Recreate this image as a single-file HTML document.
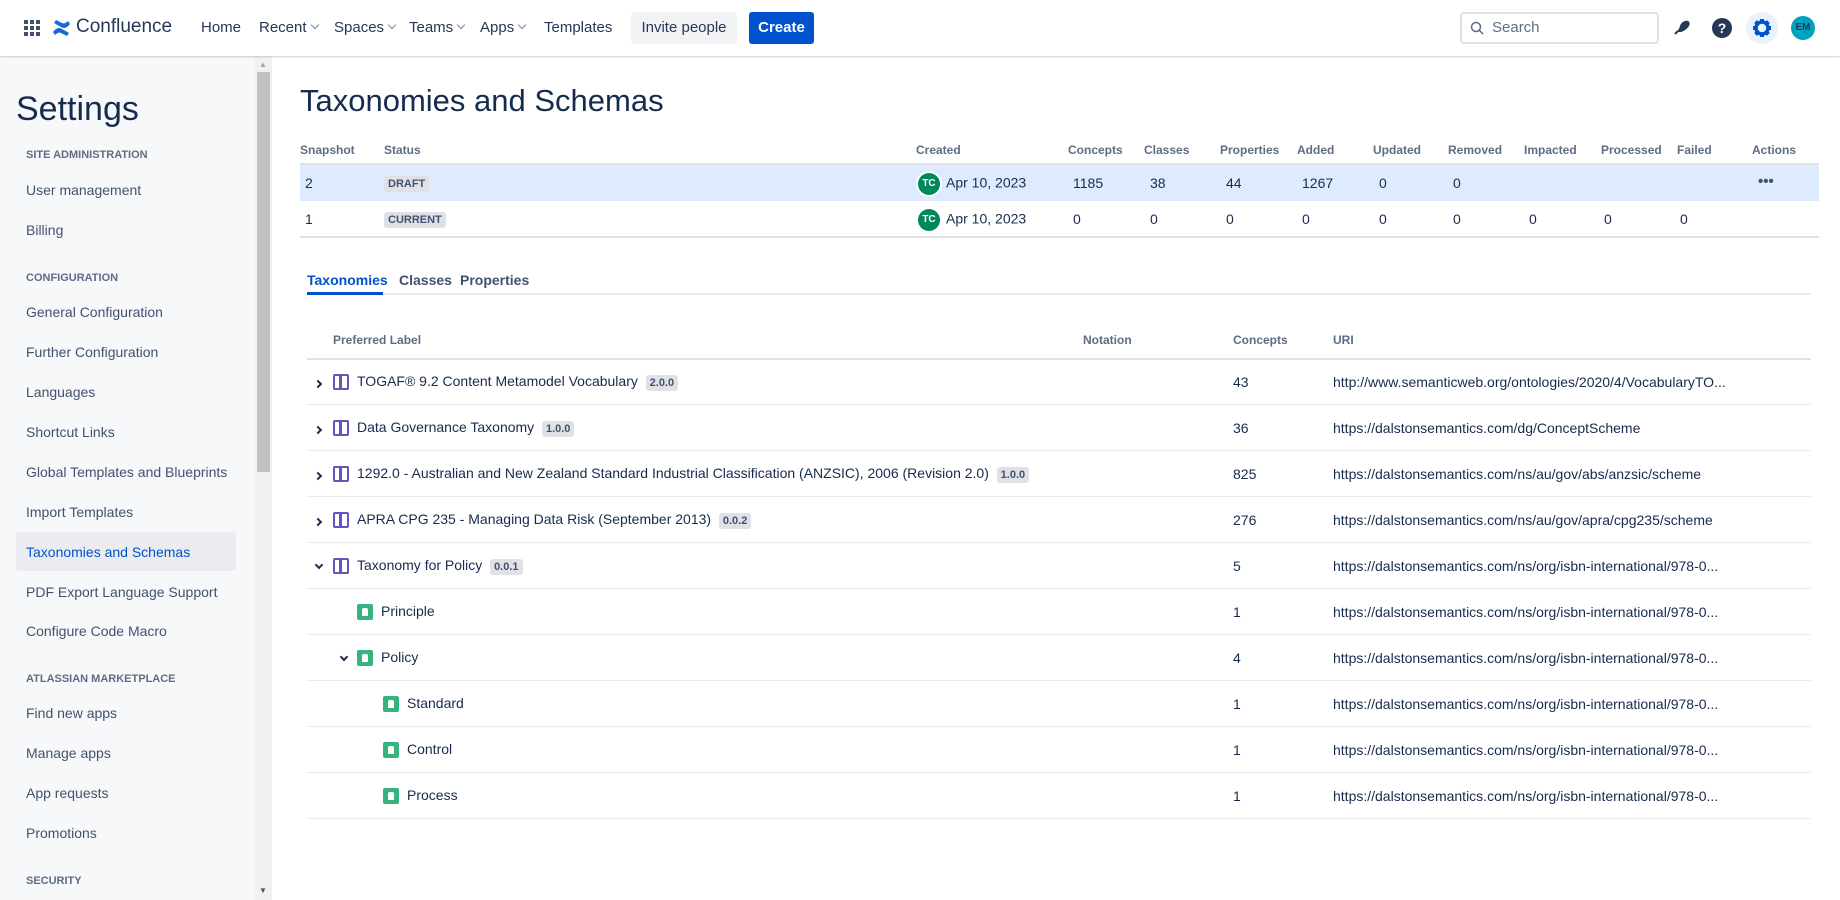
<!DOCTYPE html>
<html><head><meta charset="utf-8"><style>
*{box-sizing:border-box;margin:0;padding:0}
body{width:1840px;height:900px;overflow:hidden;font-family:"Liberation Sans",sans-serif;color:#172b4d;background:#fff;position:relative;font-size:14px}
.a{position:absolute;white-space:nowrap}
.hdr{position:absolute;left:0;top:0;width:1840px;height:56px;background:#fff;box-shadow:0 1px 2px rgba(9,30,66,.2);z-index:5}
.nav{font-size:15px;color:#253858;top:19px}
.chev{display:inline-block;width:6px;height:6px;border-right:1.3px solid #7a869a;border-bottom:1.3px solid #7a869a;transform:rotate(45deg);margin-left:5px;position:relative;top:-4px}
.side{position:absolute;left:0;top:56px;width:255px;height:844px;background:#f7f8f9}
.sb{position:absolute;left:255px;top:56px;width:17px;height:844px;background:#f1f1f1}
.si{left:26px;font-size:14px;color:#42526e}
.sh{left:26px;font-size:11px;font-weight:bold;color:#5e6c84}
.th{font-size:12px;font-weight:bold;color:#5e6c84}
.lz{display:inline-block;background:#dfe1e6;color:#42526e;font-size:11px;font-weight:bold;padding:2px 4px;border-radius:3px}
.av{display:inline-block;width:22px;height:22px;border-radius:50%;background:#00875a;color:#fff;font-size:10px;font-weight:bold;text-align:center;line-height:22px;vertical-align:middle;margin-right:6px;box-shadow:0 0 0 2px #fff}
.line{position:absolute;left:307px;width:1504px;height:1px;background:#ebecf0}
.ic{display:inline-block;width:16px;height:16px;border:2.5px solid #6554c0;border-radius:2px;position:relative;vertical-align:middle;margin-right:8px}
.ic:after{content:"";position:absolute;left:4px;top:0;width:2.5px;height:100%;background:#6554c0}
.gi{display:inline-block;width:16px;height:16px;background:#36b37e;border-radius:2px;position:relative;vertical-align:middle;margin-right:8px}
.gi:after{content:"";position:absolute;left:5px;top:4px;width:6px;height:8px;background:#fff;border-radius:2px 2px 0 0}
.tc{font-size:14px;color:#172b4d}
.ar{display:inline-block;width:6px;height:6px;border-right:2px solid #172b4d;border-bottom:2px solid #172b4d;transform:rotate(-45deg)}
.ad{transform:rotate(45deg)}
</style></head><body>
<div class="hdr">
<svg class="a" style="left:24px;top:20px" width="16" height="16"><g fill="#42526e"><rect x="0" y="0" width="4" height="4"/><rect x="6" y="0" width="4" height="4"/><rect x="12" y="0" width="4" height="4"/><rect x="0" y="6" width="4" height="4"/><rect x="6" y="6" width="4" height="4"/><rect x="12" y="6" width="4" height="4"/><rect x="0" y="12" width="4" height="4"/><rect x="6" y="12" width="4" height="4"/><rect x="0" y="12" width="4" height="4"/><rect x="12" y="12" width="4" height="4"/></g></svg>
<svg class="a" style="left:52px;top:19px" width="19" height="18" viewBox="0 0 19 18"><path d="M1 13c3-4 6-5 9-3l7 4-2 3-6-3c-2-1-4 0-6 2z M18 5c-3 4-6 5-9 3L2 4l2-3 6 3c2 1 4 0 6-2z" fill="#1868db"/></svg>
<div class="a" style="left:76px;top:16px;font-size:19px;color:#253858">Confluence</div>
<div class="a nav" style="left:201px">Home</div>
<div class="a nav" style="left:259px">Recent<span class="chev"></span></div>
<div class="a nav" style="left:334px">Spaces<span class="chev"></span></div>
<div class="a nav" style="left:409px">Teams<span class="chev"></span></div>
<div class="a nav" style="left:480px">Apps<span class="chev"></span></div>
<div class="a nav" style="left:544px">Templates</div>
<div class="a" style="left:631px;top:12px;width:106px;height:32px;background:#f1f2f4;border-radius:3px;font-size:15px;color:#253858;text-align:center;line-height:32px">Invite people</div>
<div class="a" style="left:749px;top:12px;width:65px;height:32px;background:#0052cc;border-radius:3px;font-size:15px;color:#fff;font-weight:bold;text-align:center;line-height:32px">Create</div>
<div class="a" style="left:1460px;top:12px;width:199px;height:32px;border:2px solid #dfe1e6;border-radius:4px"></div>
<svg class="a" style="left:1470px;top:21px" width="14" height="14"><circle cx="6" cy="6" r="4.5" fill="none" stroke="#5e6c84" stroke-width="1.5"/><path d="M9 9l4 4" stroke="#5e6c84" stroke-width="1.5"/></svg>
<div class="a" style="left:1492px;top:19px;font-size:15px;color:#5e6c84">Search</div>
<svg class="a" style="left:1673px;top:17px" width="20" height="20" viewBox="0 0 20 20"><path d="M3 15c2-1 3-3 4-6s4-6 8-5c2 1 2 3 1 5-2 3-5 5-8 6z" fill="#253858"/><path d="M2 17l3-3" stroke="#253858" stroke-width="2"/></svg>
<svg class="a" style="left:1711px;top:17px" width="22" height="22"><circle cx="11" cy="11" r="10" fill="#253858"/><text x="11" y="16" font-size="14" font-weight="bold" fill="#fff" text-anchor="middle" font-family="Liberation Sans">?</text></svg>
<div class="a" style="left:1746px;top:12px;width:32px;height:32px;border-radius:50%;background:#e9f2ff"></div>
<svg class="a" style="left:1751px;top:17px" width="22" height="22" viewBox="0 0 22 22"><circle cx="11" cy="11" r="6" fill="none" stroke="#0052cc" stroke-width="3.5"/><g stroke="#0052cc" stroke-width="4"><path d="M11 2v4M11 16v4M2 11h4M16 11h4M4.6 4.6l2.8 2.8M14.6 14.6l2.8 2.8M4.6 17.4l2.8-2.8M14.6 7.4l2.8-2.8"/></g><circle cx="11" cy="11" r="3" fill="#e9f2ff"/></svg>
<div class="a" style="left:1791px;top:16px;width:24px;height:24px;border-radius:50%;background:#00a3bf;color:#253858;font-size:10px;font-weight:bold;text-align:center;line-height:24px">EM</div>
</div>

<div class="side"></div>
<div class="sb"><div style="position:absolute;left:2px;top:16px;width:13px;height:400px;background:#c1c1c1"></div><div style="position:absolute;left:4px;top:4px;font-size:8px;color:#a3a3a3">▲</div><div style="position:absolute;left:4px;top:830px;font-size:8px;color:#505050">▼</div></div>
<div class="a" style="left:16px;top:90px;font-size:34px;color:#172b4d">Settings</div>
<div class="a sh" style="top:149px">SITE ADMINISTRATION</div>
<div class="a si" style="top:182px">User management</div>
<div class="a si" style="top:222px">Billing</div>
<div class="a sh" style="top:272px">CONFIGURATION</div>
<div class="a si" style="top:304px">General Configuration</div>
<div class="a si" style="top:344px">Further Configuration</div>
<div class="a si" style="top:384px">Languages</div>
<div class="a si" style="top:424px">Shortcut Links</div>
<div class="a si" style="top:464px">Global Templates and Blueprints</div>
<div class="a si" style="top:504px">Import Templates</div>
<div class="a" style="left:16px;top:532px;width:220px;height:39px;background:#ebecf0;border-radius:3px"></div>
<div class="a si" style="top:544px;color:#0052cc">Taxonomies and Schemas</div>
<div class="a si" style="top:584px">PDF Export Language Support</div>
<div class="a si" style="top:623px">Configure Code Macro</div>
<div class="a sh" style="top:673px">ATLASSIAN MARKETPLACE</div>
<div class="a si" style="top:705px">Find new apps</div>
<div class="a si" style="top:745px">Manage apps</div>
<div class="a si" style="top:785px">App requests</div>
<div class="a si" style="top:825px">Promotions</div>
<div class="a sh" style="top:875px">SECURITY</div>

<div class="a" style="left:300px;top:83px;font-size:31px;color:#172b4d">Taxonomies and Schemas</div>
<div class="a th" style="left:300px;top:143px">Snapshot</div>
<div class="a th" style="left:384px;top:143px">Status</div>
<div class="a th" style="left:916px;top:143px">Created</div>
<div class="a th" style="left:1068px;top:143px">Concepts</div>
<div class="a th" style="left:1144px;top:143px">Classes</div>
<div class="a th" style="left:1220px;top:143px">Properties</div>
<div class="a th" style="left:1297px;top:143px">Added</div>
<div class="a th" style="left:1373px;top:143px">Updated</div>
<div class="a th" style="left:1448px;top:143px">Removed</div>
<div class="a th" style="left:1524px;top:143px">Impacted</div>
<div class="a th" style="left:1601px;top:143px">Processed</div>
<div class="a th" style="left:1677px;top:143px">Failed</div>
<div class="a th" style="left:1752px;top:143px">Actions</div>
<div class="a" style="left:300px;top:163px;width:1519px;height:2px;background:#dfe1e6"></div>
<div class="a" style="left:300px;top:165px;width:1519px;height:36px;background:#deebff"></div>
<div class="a" style="left:300px;top:236px;width:1519px;height:2px;background:#dfe1e6"></div>
<div class="a tc" style="left:305px;top:175px">2</div>
<div class="a" style="left:384px;top:174px"><span class="lz">DRAFT</span></div>
<div class="a tc" style="left:918px;top:173px"><span class="av">TC</span>Apr 10, 2023</div>
<div class="a tc" style="left:1073px;top:175px">1185</div>
<div class="a tc" style="left:1150px;top:175px">38</div>
<div class="a tc" style="left:1226px;top:175px">44</div>
<div class="a tc" style="left:1302px;top:175px">1267</div>
<div class="a tc" style="left:1379px;top:175px">0</div>
<div class="a tc" style="left:1453px;top:175px">0</div>
<div class="a" style="left:1758px;top:173px;font-size:15px;font-weight:bold;letter-spacing:0px;color:#42526e">•••</div>
<div class="a tc" style="left:305px;top:211px">1</div>
<div class="a" style="left:384px;top:210px"><span class="lz">CURRENT</span></div>
<div class="a tc" style="left:918px;top:209px"><span class="av">TC</span>Apr 10, 2023</div>
<div class="a tc" style="left:1073px;top:211px">0</div><div class="a tc" style="left:1150px;top:211px">0</div><div class="a tc" style="left:1226px;top:211px">0</div><div class="a tc" style="left:1302px;top:211px">0</div><div class="a tc" style="left:1379px;top:211px">0</div><div class="a tc" style="left:1453px;top:211px">0</div><div class="a tc" style="left:1529px;top:211px">0</div><div class="a tc" style="left:1604px;top:211px">0</div><div class="a tc" style="left:1680px;top:211px">0</div>

<div class="a" style="left:307px;top:272px;font-size:14px;color:#0052cc;font-weight:bold">Taxonomies</div>
<div class="a" style="left:399px;top:272px;font-size:14px;color:#42526e;font-weight:bold">Classes</div>
<div class="a" style="left:460px;top:272px;font-size:14px;color:#42526e;font-weight:bold">Properties</div>
<div class="a" style="left:307px;top:293px;width:1504px;height:2px;background:#ebecf0"></div>
<div class="a" style="left:307px;top:292px;width:76px;height:3px;background:#0052cc"></div>

<div class="a th" style="left:333px;top:333px">Preferred Label</div>
<div class="a th" style="left:1083px;top:333px">Notation</div>
<div class="a th" style="left:1233px;top:333px">Concepts</div>
<div class="a th" style="left:1333px;top:333px">URI</div>
<div class="a" style="left:307px;top:358px;width:1504px;height:2px;background:#dfe1e6"></div>

<div class="line" style="top:404px"></div><div class="line" style="top:450px"></div><div class="line" style="top:496px"></div><div class="line" style="top:542px"></div><div class="line" style="top:588px"></div><div class="line" style="top:634px"></div><div class="line" style="top:680px"></div><div class="line" style="top:726px"></div><div class="line" style="top:772px"></div><div class="line" style="top:818px"></div>

<div class="a" style="left:315px;top:374px"><span class="ar"></span></div>
<div class="a tc" style="left:333px;top:373px"><span class="ic"></span>TOGAF® 9.2 Content Metamodel Vocabulary &nbsp;<span class="lz">2.0.0</span></div>
<div class="a tc" style="left:1233px;top:374px">43</div>
<div class="a tc" style="left:1333px;top:374px">http://www.semanticweb.org/ontologies/2020/4/VocabularyTO...</div>

<div class="a" style="left:315px;top:420px"><span class="ar"></span></div>
<div class="a tc" style="left:333px;top:419px"><span class="ic"></span>Data Governance Taxonomy &nbsp;<span class="lz">1.0.0</span></div>
<div class="a tc" style="left:1233px;top:420px">36</div>
<div class="a tc" style="left:1333px;top:420px">https://dalstonsemantics.com/dg/ConceptScheme</div>

<div class="a" style="left:315px;top:466px"><span class="ar"></span></div>
<div class="a tc" style="left:333px;top:465px"><span class="ic"></span>1292.0 - Australian and New Zealand Standard Industrial Classification (ANZSIC), 2006 (Revision 2.0) &nbsp;<span class="lz">1.0.0</span></div>
<div class="a tc" style="left:1233px;top:466px">825</div>
<div class="a tc" style="left:1333px;top:466px">https://dalstonsemantics.com/ns/au/gov/abs/anzsic/scheme</div>

<div class="a" style="left:315px;top:512px"><span class="ar"></span></div>
<div class="a tc" style="left:333px;top:511px"><span class="ic"></span>APRA CPG 235 - Managing Data Risk (September 2013) &nbsp;<span class="lz">0.0.2</span></div>
<div class="a tc" style="left:1233px;top:512px">276</div>
<div class="a tc" style="left:1333px;top:512px">https://dalstonsemantics.com/ns/au/gov/apra/cpg235/scheme</div>

<div class="a" style="left:316px;top:555px"><span class="ar ad"></span></div>
<div class="a tc" style="left:333px;top:557px"><span class="ic"></span>Taxonomy for Policy &nbsp;<span class="lz">0.0.1</span></div>
<div class="a tc" style="left:1233px;top:558px">5</div>
<div class="a tc" style="left:1333px;top:558px">https://dalstonsemantics.com/ns/org/isbn-international/978-0...</div>

<div class="a tc" style="left:357px;top:603px"><span class="gi"></span>Principle</div>
<div class="a tc" style="left:1233px;top:604px">1</div>
<div class="a tc" style="left:1333px;top:604px">https://dalstonsemantics.com/ns/org/isbn-international/978-0...</div>

<div class="a" style="left:341px;top:647px"><span class="ar ad"></span></div>
<div class="a tc" style="left:357px;top:649px"><span class="gi"></span>Policy</div>
<div class="a tc" style="left:1233px;top:650px">4</div>
<div class="a tc" style="left:1333px;top:650px">https://dalstonsemantics.com/ns/org/isbn-international/978-0...</div>

<div class="a tc" style="left:383px;top:695px"><span class="gi"></span>Standard</div>
<div class="a tc" style="left:1233px;top:696px">1</div>
<div class="a tc" style="left:1333px;top:696px">https://dalstonsemantics.com/ns/org/isbn-international/978-0...</div>

<div class="a tc" style="left:383px;top:741px"><span class="gi"></span>Control</div>
<div class="a tc" style="left:1233px;top:742px">1</div>
<div class="a tc" style="left:1333px;top:742px">https://dalstonsemantics.com/ns/org/isbn-international/978-0...</div>

<div class="a tc" style="left:383px;top:787px"><span class="gi"></span>Process</div>
<div class="a tc" style="left:1233px;top:788px">1</div>
<div class="a tc" style="left:1333px;top:788px">https://dalstonsemantics.com/ns/org/isbn-international/978-0...</div>
</body></html>
